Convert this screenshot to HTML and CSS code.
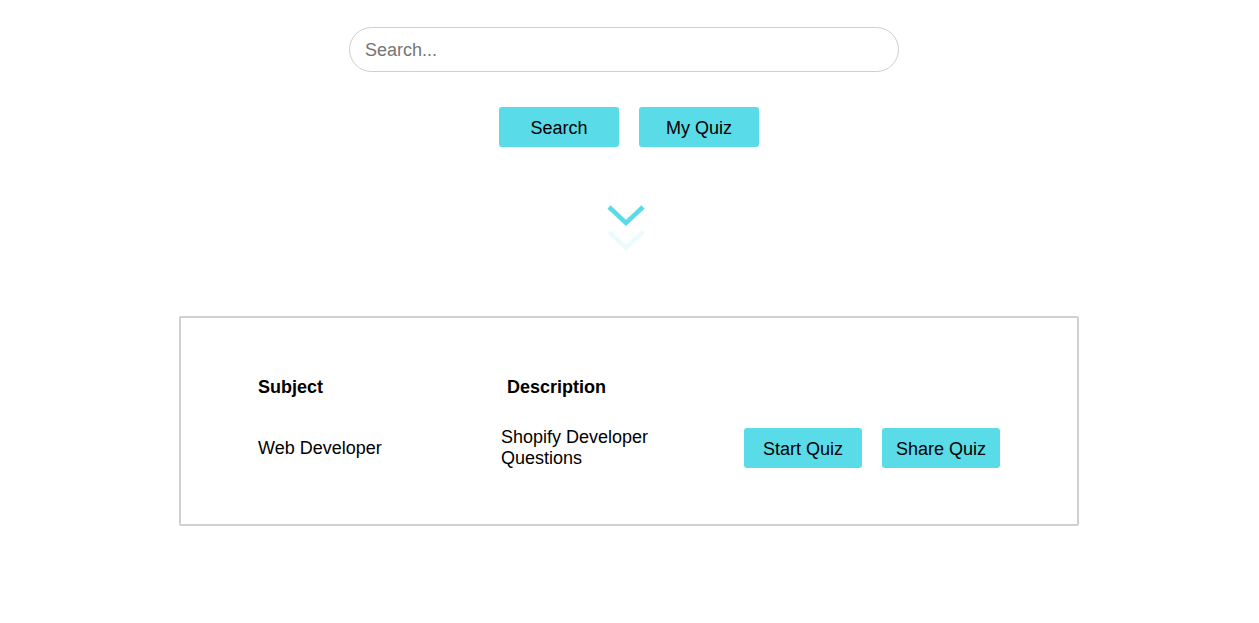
FILE: index.html
```html
<!DOCTYPE html>
<html>
<head>
<meta charset="utf-8">
<link rel="stylesheet" href="styles.css">
</head>
<body>
<div class="page">
  <form class="search-form">
    <input class="search-input" type="text" placeholder="Search...">
  </form>
  <div class="actions">
    <button class="btn" type="button">Search</button>
    <button class="btn" type="button">My Quiz</button>
  </div>
  <div class="chevrons">
    <svg width="40" height="50" viewBox="0 0 40 50">
      <polyline points="3,3 20,19 37,3" fill="none" stroke="#5adbe8" stroke-width="4.5"/>
      <polyline points="3,28 20,44 37,28" fill="none" stroke="#5adbe8" stroke-opacity="0.12" stroke-width="4.5"/>
    </svg>
  </div>
  <div class="card">
    <div class="quiz-grid">
      <div class="th">Subject</div>
      <div class="th th-desc">Description</div>
      <div></div>
      <div class="td">Web Developer</div>
      <div class="td td-desc">Shopify Developer Questions</div>
      <div class="td-actions">
        <button class="btn btn-sm" type="button">Start Quiz</button>
        <button class="btn btn-sm" type="button">Share Quiz</button>
      </div>
    </div>
  </div>
</div>
</body>
</html>
```
FILE: styles.css
```css
html, body {
  margin: 0;
  padding: 0;
  background: #fff;
}
body {
  font-family: "Liberation Sans", Arial, Helvetica, sans-serif;
  font-size: 18px;
  color: #000;
}
.page {
  display: flex;
  flex-direction: column;
  align-items: center;
  padding-top: 27px;
  padding-right: 1px;
}
.search-form {
  width: 560px;
  margin: 0;
}
.search-input {
  display: block;
  box-sizing: border-box;
  width: 550px;
  height: 45px;
  border: 1px solid #cfcfcf;
  border-radius: 23px;
  padding: 1px 15px 0;
  font-family: "Liberation Sans", Arial, sans-serif;
  font-size: 18px;
  color: #000;
  outline: none;
  background: #fff;
}
.search-input::placeholder {
  color: #757575;
}
.actions {
  display: flex;
  gap: 20px;
  margin-top: 35px;
}
.btn {
  box-sizing: border-box;
  width: 120px;
  height: 40px;
  border: none;
  border-radius: 3px;
  background: #5adbe8;
  color: #000;
  font-family: "Liberation Sans", Arial, sans-serif;
  font-size: 18px;
  padding: 2px 0 0;
  cursor: pointer;
}
.btn-sm {
  width: 118px;
}
.chevrons {
  margin-top: 57px;
  margin-right: 6px;
  height: 50px;
}
.chevrons svg {
  display: block;
}
.card {
  box-sizing: border-box;
  width: 900px;
  height: 210px;
  margin-top: 62px;
  border: 2px solid #d0d0d0;
  border-radius: 2px;
  padding: 59px 0 0 77px;
}
.quiz-grid {
  display: grid;
  grid-template-columns: 243px 243px auto;
  row-gap: 29px;
  align-items: center;
}
.th {
  font-weight: bold;
  line-height: 21px;
}
.th-desc {
  padding-left: 6px;
}
.td {
  line-height: 21px;
}
.td-desc {
  width: 190px;
}
.td-actions {
  display: flex;
  gap: 20px;
}
```
